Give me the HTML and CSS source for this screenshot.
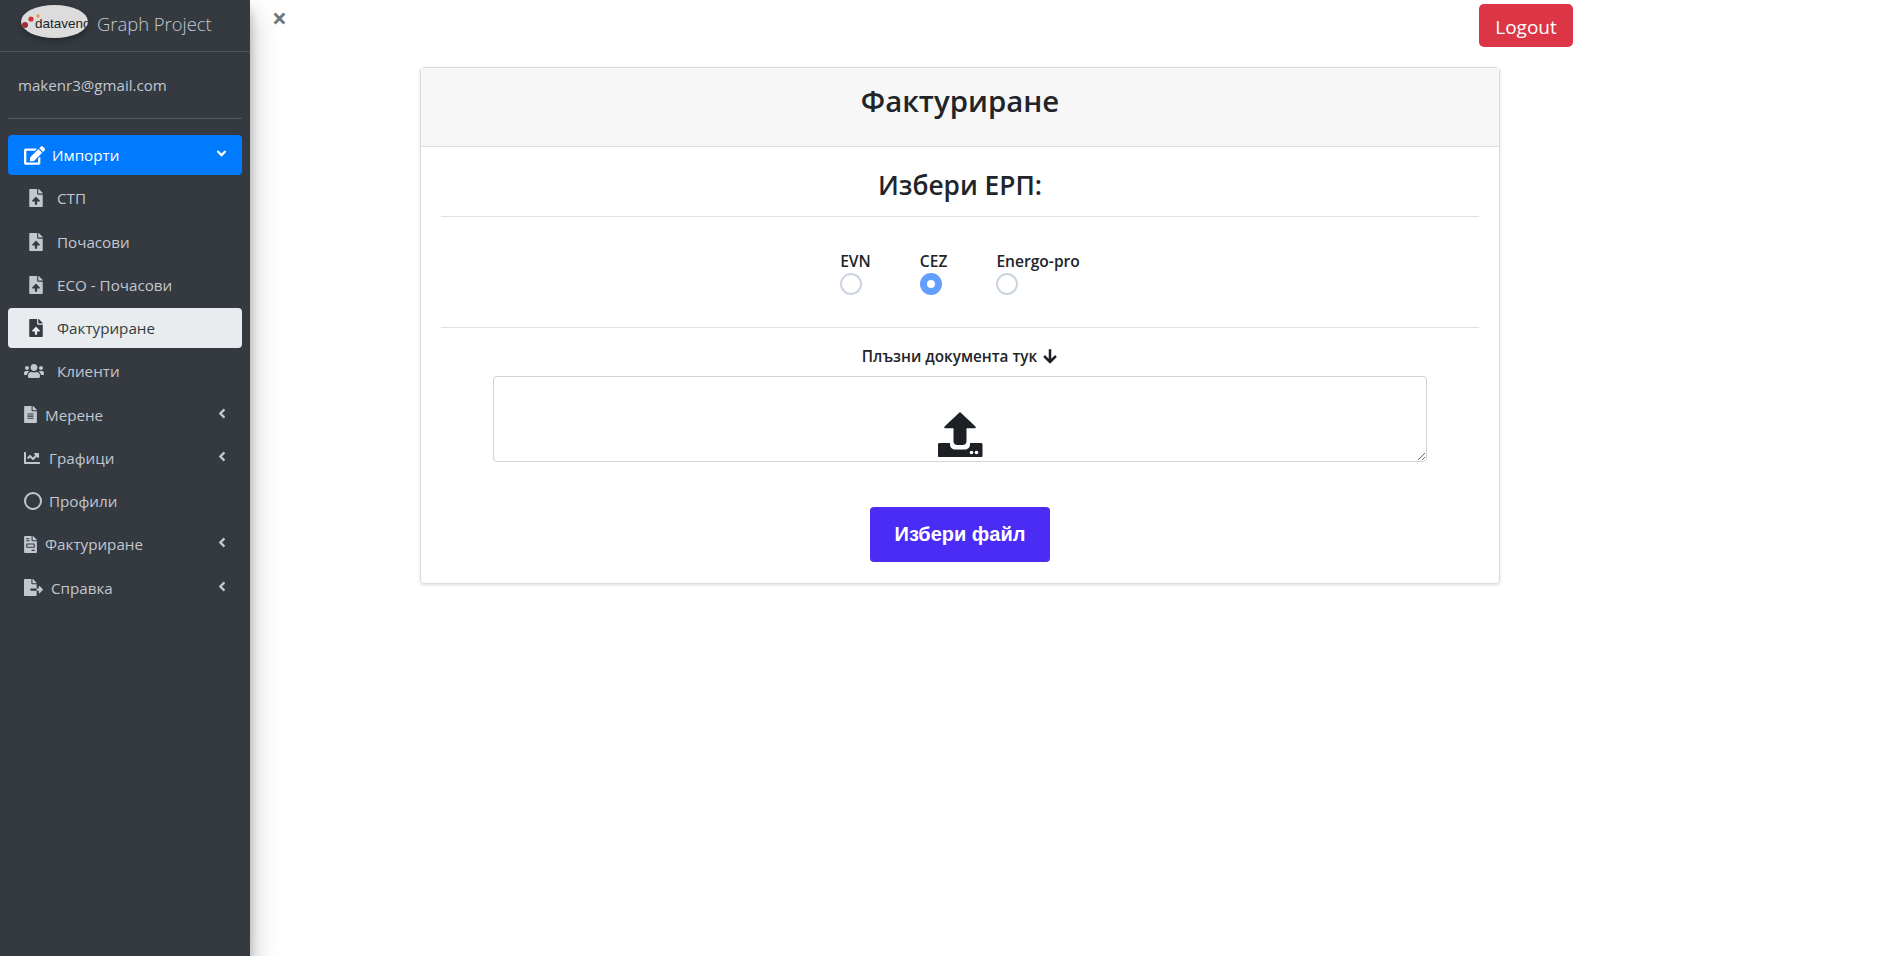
FILE: index.html
```html
<!DOCTYPE html>
<html lang="bg">
<head>
    <meta name="viewport" content="width=device-width, initial-scale=1">
    <title>Фактуриране</title>
    <link rel="stylesheet" href="styles.css">
</head>
<body>
    <svg class="icon-defs" width="0" height="0">
        <symbol id="i-edit" viewBox="0 0 576 512"><path d="M402.6 83.2l90.2 90.2c3.8 3.8 3.8 10 0 13.8L274.4 405.6l-92.8 10.3c-12.4 1.4-22.9-9.1-21.5-21.5l10.3-92.8L388.8 83.2c3.8-3.8 10-3.8 13.8 0zm162-22.9l-48.8-48.8c-15.2-15.2-39.9-15.2-55.2 0l-35.4 35.4c-3.8 3.8-3.8 10 0 13.8l90.2 90.2c3.8 3.8 10 3.8 13.8 0l35.4-35.4c15.2-15.3 15.2-40 0-55.2zM384 346.2V448H64V128h229.8c3.2 0 6.2-1.3 8.5-3.5l40-40c7.6-7.6 2.2-20.5-8.5-20.5H48C21.5 64 0 85.5 0 112v352c0 26.5 21.5 48 48 48h352c26.5 0 48-21.5 48-48V306.2c0-10.7-12.9-16-20.5-8.5l-40 40c-2.2 2.3-3.5 5.3-3.5 8.5z"/></symbol>
        <symbol id="i-upload" viewBox="0 0 384 512"><path d="M224 136V0H24C10.7 0 0 10.7 0 24v464c0 13.3 10.7 24 24 24h336c13.3 0 24-10.7 24-24V160H248c-13.2 0-24-10.8-24-24zm65.18 216.01H224v80c0 8.84-7.16 16-16 16h-32c-8.84 0-16-7.16-16-16v-80H94.82c-14.28 0-21.41-17.29-11.27-27.36l96.42-95.7c6.65-6.61 17.39-6.61 24.04 0l96.42 95.7c10.15 10.07 3.03 27.36-11.25 27.36zM377 105L279.1 7c-4.5-4.5-10.6-7-17-7H256v128h128v-6.1c0-6.3-2.5-12.4-7-16.9z"/></symbol>
        <symbol id="i-users" viewBox="0 0 640 512"><path d="M96 224c35.3 0 64-28.7 64-64s-28.7-64-64-64-64 28.7-64 64 28.7 64 64 64zm448 0c35.3 0 64-28.7 64-64s-28.7-64-64-64-64 28.7-64 64 28.7 64 64 64zm32 32h-64c-17.6 0-33.5 7.1-45.1 18.6 40.3 22.1 68.9 62 75.1 109.4h66c17.7 0 32-14.3 32-32v-32c0-35.3-28.7-64-64-64zm-256 0c61.9 0 112-50.1 112-112S381.9 32 320 32 208 82.1 208 144s50.1 112 112 112zm76.8 32h-8.3c-20.8 10-43.9 16-68.5 16s-47.6-6-68.5-16h-8.3C179.6 288 128 339.6 128 403.2V432c0 26.5 21.5 48 48 48h288c26.5 0 48-21.5 48-48v-28.8c0-63.6-51.6-115.2-115.2-115.2zm-223.7-13.4C161.5 263.1 145.6 256 128 256H64c-35.3 0-64 28.7-64 64v32c0 17.7 14.3 32 32 32h65.9c6.3-47.4 34.9-87.3 75.2-109.4z"/></symbol>
        <symbol id="i-file" viewBox="0 0 384 512"><path d="M224 136V0H24C10.7 0 0 10.7 0 24v464c0 13.3 10.7 24 24 24h336c13.3 0 24-10.7 24-24V160H248c-13.2 0-24-10.8-24-24zm64 236c0 6.6-5.4 12-12 12H108c-6.6 0-12-5.4-12-12v-8c0-6.6 5.4-12 12-12h168c6.6 0 12 5.4 12 12v8zm0-64c0 6.6-5.4 12-12 12H108c-6.6 0-12-5.4-12-12v-8c0-6.6 5.4-12 12-12h168c6.6 0 12 5.4 12 12v8zm0-72v8c0 6.6-5.4 12-12 12H108c-6.6 0-12-5.4-12-12v-8c0-6.6 5.4-12 12-12h168c6.6 0 12 5.4 12 12zm96-114.1v6.1H256V0h6.1c6.4 0 12.5 2.5 17 7l97.9 98c4.5 4.5 7 10.6 7 16.9z"/></symbol>
        <symbol id="i-chart" viewBox="0 0 512 512"><path d="M496 384H64V80c0-8.84-7.16-16-16-16H16C7.16 64 0 71.16 0 80v336c0 17.67 14.33 32 32 32h464c8.84 0 16-7.16 16-16v-32c0-8.84-7.16-16-16-16zM464 96H345.94c-21.38 0-32.09 25.85-16.97 40.97l32.4 32.4L288 242.75l-73.37-73.37c-12.5-12.5-32.76-12.5-45.25 0l-68.69 68.69c-6.25 6.25-6.25 16.38 0 22.63l22.62 22.62c6.25 6.25 16.38 6.25 22.63 0L192 237.25l73.37 73.37c12.5 12.5 32.76 12.5 45.25 0l96-96 32.4 32.4c15.12 15.12 40.97 4.41 40.97-16.97V112c.01-8.84-7.15-16-16.99-16z"/></symbol>
        <symbol id="i-invoice" viewBox="0 0 384 512"><path d="M288 256H96v64h192v-64zm89-151L279.1 7c-4.5-4.5-10.6-7-17-7H256v128h128v-6.1c0-6.3-2.5-12.4-7-16.9zm-153 31V0H24C10.7 0 0 10.7 0 24v464c0 13.3 10.7 24 24 24h336c13.3 0 24-10.7 24-24V160H248c-13.2 0-24-10.8-24-24zM64 72c0-4.42 3.58-8 8-8h80c4.42 0 8 3.58 8 8v16c0 4.42-3.58 8-8 8H72c-4.42 0-8-3.58-8-8V72zm0 64c0-4.42 3.58-8 8-8h80c4.42 0 8 3.58 8 8v16c0 4.42-3.58 8-8 8H72c-4.42 0-8-3.58-8-8v-16zm256 304c0 4.42-3.58 8-8 8h-80c-4.42 0-8-3.58-8-8v-16c0-4.42 3.58-8 8-8h80c4.42 0 8 3.58 8 8v16zm0-200v96c0 8.84-7.16 16-16 16H80c-8.84 0-16-7.16-16-16v-96c0-8.84 7.16-16 16-16h224c8.84 0 16 7.16 16 16z"/></symbol>
        <symbol id="i-export" viewBox="0 0 576 512"><path d="M384 121.9c0-6.3-2.5-12.4-7-16.9L279.1 7c-4.5-4.5-10.6-7-17-7H256v128h128zM571 308l-95.7-96.4c-10.1-10.1-27.4-3-27.4 11.3V288h-64v64h64v65.2c0 14.3 17.3 21.4 27.4 11.3L571 332c6.6-6.6 6.6-17.4 0-24zm-379 28v-32c0-8.8 7.2-16 16-16h176V160H248c-13.2 0-24-10.8-24-24V0H24C10.7 0 0 10.7 0 24v464c0 13.3 10.7 24 24 24h336c13.3 0 24-10.7 24-24V352H208c-8.8 0-16-7.2-16-16z"/></symbol>
        <symbol id="i-left" viewBox="0 0 256 512"><path d="M31.7 239l136-136c9.4-9.4 24.6-9.4 33.9 0l22.6 22.6c9.4 9.4 9.4 24.6 0 33.9L127.9 256l96.4 96.4c9.4 9.4 9.4 24.6 0 33.9L201.7 409c-9.4 9.4-24.6 9.4-33.9 0l-136-136c-9.5-9.4-9.5-24.6-.1-34z"/></symbol>
        <symbol id="i-down" viewBox="0 0 320 512"><path d="M143 352.3L7 216.3c-9.4-9.4-9.4-24.6 0-33.9l22.6-22.6c9.4-9.4 24.6-9.4 33.9 0l96.4 96.4 96.4-96.4c9.4-9.4 24.6-9.4 33.9 0l22.6 22.6c9.4 9.4 9.4 24.6 0 33.9l-136 136c-9.2 9.4-24.4 9.4-33.8 0z"/></symbol>
    </svg>

    <aside class="sidebar">
        <div class="brand">
            <div class="brand-logo">
                <svg class="brand-dots" viewBox="0 0 20 20" width="20" height="20">
                    <circle cx="4" cy="13" r="3" fill="#a32a2f"/>
                    <circle cx="10" cy="7" r="2.6" fill="#d5332f"/>
                    <circle cx="17" cy="4" r="1.7" fill="#dd9a3a"/>
                </svg>
                <span class="brand-logo-text">datavend</span>
            </div>
            <span class="brand-name">Graph Project</span>
        </div>
        <div class="user">makenr3@gmail.com</div>
        <nav class="menu">
            <a class="item open"><svg class="ic ic-edit"><use href="#i-edit"/></svg><span class="lbl">Импорти</span><svg class="caret caret-down"><use href="#i-down"/></svg></a>
            <a class="item sub"><svg class="ic ic-up"><use href="#i-upload"/></svg><span class="lbl">СТП</span></a>
            <a class="item sub"><svg class="ic ic-up"><use href="#i-upload"/></svg><span class="lbl">Почасови</span></a>
            <a class="item sub"><svg class="ic ic-up"><use href="#i-upload"/></svg><span class="lbl">ECO - Почасови</span></a>
            <a class="item sub active"><svg class="ic ic-up"><use href="#i-upload"/></svg><span class="lbl">Фактуриране</span></a>
            <a class="item"><svg class="ic ic-users"><use href="#i-users"/></svg><span class="lbl">Клиенти</span></a>
            <a class="item"><svg class="ic ic-doc"><use href="#i-file"/></svg><span class="lbl">Мерене</span><svg class="caret"><use href="#i-left"/></svg></a>
            <a class="item"><svg class="ic ic-chart"><use href="#i-chart"/></svg><span class="lbl">Графици</span><svg class="caret"><use href="#i-left"/></svg></a>
            <a class="item"><span class="ic-circle"></span><span class="lbl">Профили</span></a>
            <a class="item"><svg class="ic ic-doc"><use href="#i-invoice"/></svg><span class="lbl">Фактуриране</span><svg class="caret"><use href="#i-left"/></svg></a>
            <a class="item"><svg class="ic ic-export"><use href="#i-export"/></svg><span class="lbl">Справка</span><svg class="caret"><use href="#i-left"/></svg></a>
        </nav>
    </aside>

    <main class="content">
        <div class="topbar">
            <span class="close">×</span>
            <button class="logout">Logout</button>
        </div>
        <section class="card">
            <div class="card-header"><h1>Фактуриране</h1></div>
            <div class="card-body">
                <h2>Избери ЕРП:</h2>
                <div class="erp-row">
                    <label class="erp">EVN<span class="radio"></span></label>
                    <label class="erp">CEZ<span class="radio checked"></span></label>
                    <label class="erp">Energo-pro<span class="radio"></span></label>
                </div>
                <div class="drop-label">Плъзни документа тук
                    <svg class="arrow" viewBox="0 0 14 14" width="16" height="16"><path d="M7 1v11M1.800 7L7 12.200 12.200 7" fill="none" stroke="#1d2125" stroke-width="2.200"/></svg>
                </div>
                <div class="drop">
                    <textarea class="drop-area"></textarea>
                    <svg class="drop-icon" viewBox="0 0 46 46" width="46" height="46">
                        <path d="M23 1L38.500 15.500c.6.700.2 1.800-.8 1.800H29.500V30c0 2.500-1.500 4-4 4h-5c-2.500 0-4-1.500-4-4V17.300H8.300c-1 0-1.400-1.100-.8-1.800z" fill="#1d2125"/>
                        <path d="M1 33.500c0-1 .7-1.500 1.500-1.500H13v1.500c0 3 2.500 5 5.500 5h9c3 0 5.500-2 5.500-5V32h11c.8 0 1.500.5 1.500 1.500V45c0 .6-.5 1-1 1H2c-.5 0-1-.4-1-1z" fill="#1d2125"/>
                        <circle cx="34.500" cy="41.500" r="1.800" fill="#fff"/>
                        <circle cx="39.500" cy="41.500" r="1.800" fill="#fff"/>
                    </svg>
                </div>
                <div class="pick-row"><button class="pick">Избери файл</button></div>
            </div>
        </section>
    </main>
</body>
</html>
```

FILE: styles.css
```css
* {
    box-sizing: border-box;
}
body {
    margin: 0;
    min-height: 100vh;
    display: flex;
    font-family: "Open Sans", "Noto Sans", sans-serif;
    background: #fff;
    color: #212529;
    overflow: hidden;
}
.icon-defs {
    position: absolute;
}

/* sidebar */
.sidebar {
    width: 250px;
    flex-shrink: 0;
    min-height: 100vh;
    background: #343a40;
    color: #c2c7d0;
    box-shadow: 0 14px 28px rgba(0, 0, 0, 0.25), 0 10px 10px rgba(0, 0, 0, 0.22);
    padding-bottom: 8px;
}
.brand {
    height: 52px;
    display: flex;
    align-items: center;
    padding-left: 21px;
    border-bottom: 1px solid #4b545c;
}
.brand-logo {
    position: relative;
    width: 67px;
    height: 33px;
    margin-top: -8px;
    border-radius: 50%;
    background: #dcdcdc;
    overflow: hidden;
    box-shadow: 0 3px 6px rgba(0, 0, 0, 0.3);
    display: flex;
    align-items: center;
    padding-left: 14px;
}
.brand-dots {
    position: absolute;
    left: 0;
    top: 7px;
}
.brand-logo-text {
    font-family: "Liberation Sans", sans-serif;
    font-size: 13.5px;
    color: #222;
    white-space: nowrap;
    margin-top: 3px;
}
.brand-name {
    margin-left: 9px;
    margin-top: -5px;
    font-size: 18.400px;
    font-weight: 300;
    color: #c5c9cf;
}
.user {
    height: 67px;
    margin: 0 8px;
    padding: 23px 10px 0;
    border-bottom: 1px solid #4f5962;
    font-size: 15.100px;
    color: #c2c7d0;
}
.menu {
    padding-top: 16px;
    display: flex;
    flex-direction: column;
}
.item {
    height: 40px;
    margin: 0 8px 3.250px;
    padding: 0 16px;
    display: flex;
    align-items: center;
    border-radius: 4px;
    font-size: 15.200px;
    color: #c2c7d0;
}
.item.sub {
    padding-left: 21px;
}
.item.open {
    background: #007bff;
    color: #fff;
}
.item.active {
    background: #e9ecef;
    color: #343a40;
}
.ic {
    fill: currentColor;
    flex-shrink: 0;
}
.ic-edit {
    width: 21px;
    height: 19px;
    margin-right: 7px;
}
.ic-up {
    width: 14px;
    height: 18px;
    margin-right: 14px;
}
.ic-users {
    width: 20px;
    height: 16px;
    margin-right: 13px;
}
.ic-doc {
    width: 13px;
    height: 17px;
    margin-right: 8px;
}
.ic-chart {
    width: 16px;
    height: 16px;
    margin-right: 9px;
}
.ic-export {
    width: 19px;
    height: 17px;
    margin-right: 8px;
}
.ic-circle {
    width: 18px;
    height: 18px;
    margin-right: 7px;
    border: 2px solid currentColor;
    border-radius: 50%;
    flex-shrink: 0;
}
.caret {
    margin-left: auto;
    width: 8px;
    height: 15px;
    margin-right: 0;
    margin-top: -3px;
    fill: currentColor;
}
.caret-down {
    width: 11px;
    margin-right: -1px;
}

/* main */
.content {
    flex: 1;
}
.topbar {
    width: 1323px;
    height: 67px;
    padding: 4px 0 0 22px;
    display: flex;
    justify-content: space-between;
    align-items: flex-start;
}
.close {
    margin-top: -1px;
    font-size: 26px;
    line-height: 30px;
    font-weight: 700;
    color: #6c757d;
}
.logout {
    width: 94px;
    height: 43px;
    padding-top: 3px;
    border: 0;
    border-radius: 5px;
    background: #dc3545;
    color: #fff;
    font-family: inherit;
    font-size: 19px;
}
.card {
    width: 1080px;
    height: 517px;
    margin-left: 170px;
    border: 1px solid #dcdcdc;
    border-radius: 4px;
    box-shadow: 0 1px 3px rgba(0, 0, 0, 0.15);
}
.card-header {
    height: 79px;
    padding-bottom: 12px;
    background: #f7f7f7;
    border-bottom: 1px solid #dcdcdc;
    display: flex;
    align-items: center;
    justify-content: center;
}
h1 {
    margin: 0;
    font-size: 29.400px;
    font-weight: 600;
}
.card-body {
    padding: 0 20px;
}
h2 {
    margin: 0;
    height: 70px;
    padding-top: 20px;
    border-bottom: 1px solid #dee2e6;
    font-size: 26.300px;
    font-weight: 600;
    line-height: 36px;
    text-align: center;
}
.erp-row {
    height: 111px;
    padding-top: 33px;
    border-bottom: 1px solid #dee2e6;
    display: flex;
    justify-content: center;
    gap: 49px;
    font-size: 15.600px;
    font-weight: 600;
}
.erp {
    display: flex;
    flex-direction: column;
    align-items: flex-start;
    line-height: 23px;
}
.radio {
    width: 22px;
    height: 22px;
    border: 2px solid #cbd5e0;
    border-radius: 50%;
    background: #fff;
}
.radio.checked {
    border: 7px solid #649eff;
}
.drop-label {
    margin-top: 17px;
    height: 21px;
    display: flex;
    align-items: center;
    justify-content: center;
    gap: 5px;
    font-size: 15.300px;
    font-weight: 600;
}
.drop {
    position: relative;
    width: 934px;
    height: 86px;
    margin: 10px auto 0;
}
.drop-area {
    display: block;
    width: 100%;
    height: 100%;
    border: 1px solid #ced4da;
    border-radius: 4px;
    background: #fff;
}
.drop-icon {
    position: absolute;
    left: 444px;
    top: 35px;
}
.pick-row {
    margin-top: 45px;
    display: flex;
    justify-content: center;
}
.pick {
    width: 180px;
    height: 55px;
    border: 0;
    border-radius: 4px;
    background: #4a2cf5;
    color: #fff;
    font-family: "Liberation Sans", sans-serif;
    font-size: 20px;
    font-weight: 700;
}
```
